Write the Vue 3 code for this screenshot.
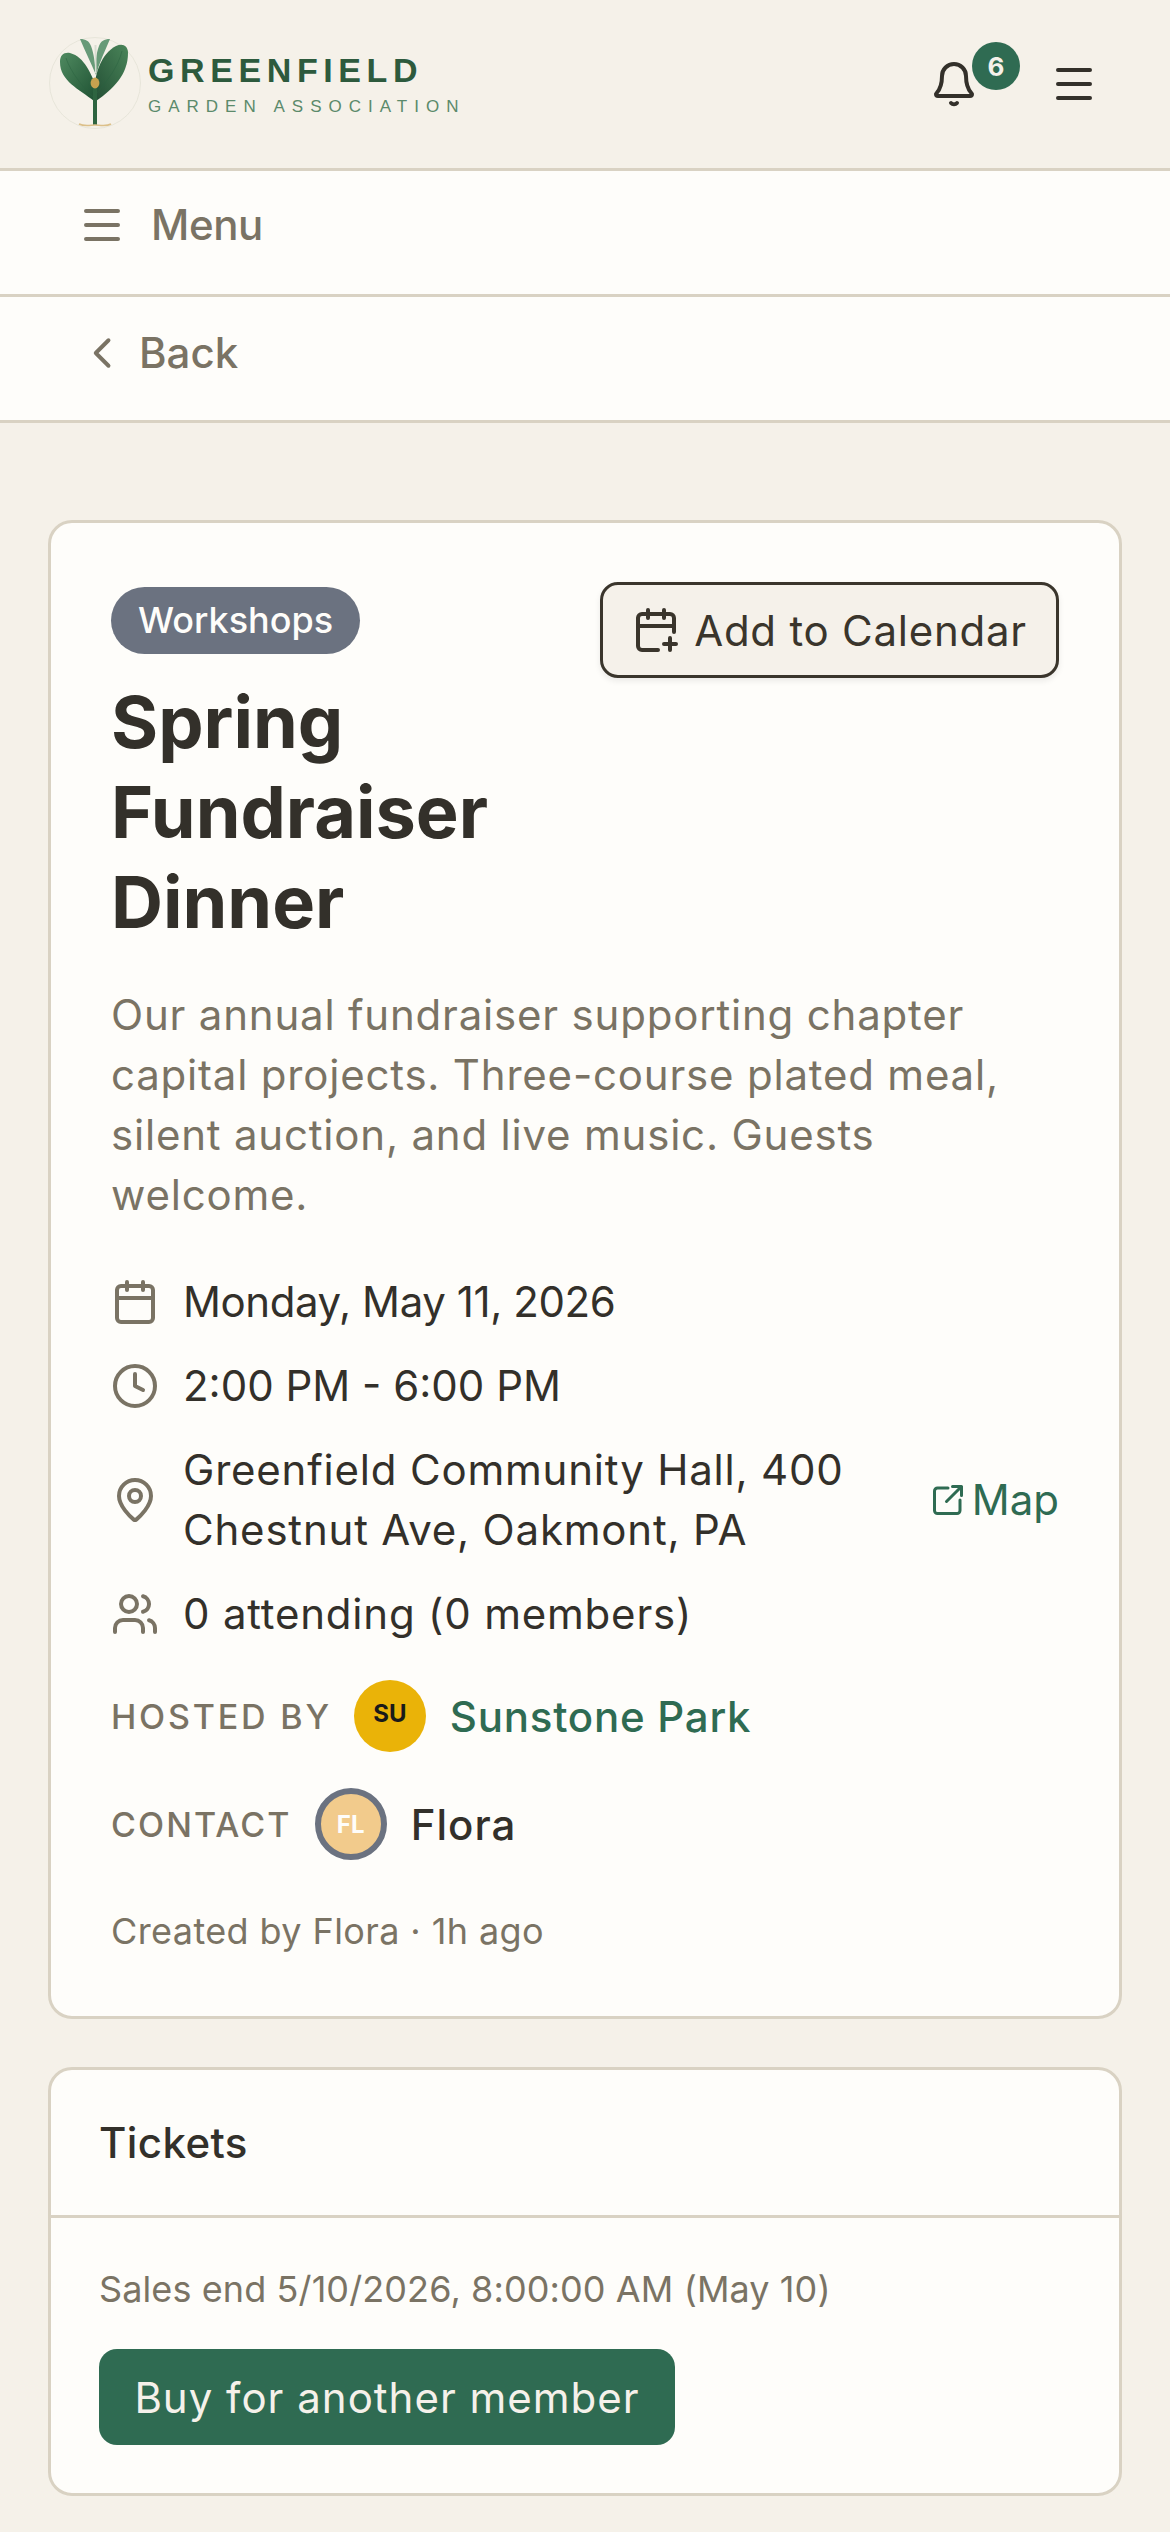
<template>
  <div class="page">
    <header class="topbar">
      <div class="brand">
        <svg class="logo" viewBox="0 0 94 94" width="94" height="94">
          <defs>
            <linearGradient id="leafA" x1="0" y1="0" x2="1" y2="1">
              <stop offset="0" stop-color="#4f8a60" />
              <stop offset="1" stop-color="#1f5233" />
            </linearGradient>
            <linearGradient id="leafB" x1="1" y1="0" x2="0" y2="1">
              <stop offset="0" stop-color="#4a8559" />
              <stop offset="1" stop-color="#234f35" />
            </linearGradient>
          </defs>
          <circle cx="46" cy="46" r="45.5" fill="none" stroke="#e3e2d6" stroke-width="0.8" />
          <path d="M31 2 C37 2 40 4 42 9 C45 17 46 26 47 38 C42 26 36 14 31 2Z" fill="#679a78" />
          <path d="M61 2 C55 2 52 4 50 9 C47 17 46 26 47 38 C50 26 56 14 61 2Z" fill="#679a78" />
          <path d="M45.5 8 L47.5 8 L47.5 36 L46 36Z" fill="#d9ddd2" />
          <path d="M45 64 C30 52 11 44 11 25 C11 18 15 15 21 16 C36 20 42 38 46 46Z" fill="url(#leafA)" />
          <path d="M47 64 C64 52 79 38 79 16 C79 8 73 6 67 9 C52 17 47 36 46 46Z" fill="url(#leafB)" />
          <path d="M17 21 C22 36 34 50 44 60" fill="none" stroke="#2a6340" stroke-width="0.5" />
          <path d="M73 14 C69 30 58 44 48 56" fill="none" stroke="#2a6340" stroke-width="0.5" />
          <rect x="44" y="46" width="4" height="42" fill="#2d6440" />
          <ellipse cx="46" cy="46" rx="4.4" ry="5.4" fill="#c7a24f" />
          <path d="M30 87 C36 90 42 88 46 88 C50 88 57 90 62 87" fill="none" stroke="#dcc08a" stroke-width="1.6" />
        </svg>
        <div class="brand-text">
          <div class="brand-name">GREENFIELD</div>
          <div class="brand-sub">GARDEN ASSOCIATION</div>
        </div>
      </div>
      <div class="top-actions">
        <div class="bell">
          <svg width="48" height="48" viewBox="0 0 24 24" fill="none" stroke="#33302a" stroke-width="2" stroke-linecap="round" stroke-linejoin="round">
            <path d="M6 8a6 6 0 0 1 12 0c0 7 3 8.500 3 9a1 1 0 0 1-1 1H4a1 1 0 0 1-1-1c0-.5 3-2 3-9" />
            <path d="M10.500 21.500a2 2 0 0 0 3 0" />
          </svg>
          <span class="badge">6</span>
        </div>
        <svg class="burger" width="48" height="48" viewBox="0 0 24 24" fill="none" stroke="#33302a" stroke-width="2" stroke-linecap="round">
          <path d="M4 5h16M4 12h16M4 19h16" />
        </svg>
      </div>
    </header>

    <div class="subrow menu-row">
      <svg width="48" height="48" viewBox="0 0 24 24" fill="none" stroke="#7a7364" stroke-width="2" stroke-linecap="round">
        <path d="M4 5h16M4 12h16M4 19h16" />
      </svg>
      <span>Menu</span>
    </div>
    <div class="subrow back-row">
      <svg width="36" height="36" viewBox="0 0 24 24" fill="none" stroke="#7a7364" stroke-width="2.600" stroke-linecap="round" stroke-linejoin="round">
        <path d="M15 3.500 6.500 12l8.500 8.500" />
      </svg>
      <span>Back</span>
    </div>

    <main class="content">
      <section class="card event">
        <div class="event-top">
          <div class="event-head">
            <span class="tag">Workshops</span>
            <h1>Spring Fundraiser Dinner</h1>
          </div>
          <button class="cal-btn">
            <svg width="48" height="48" viewBox="0 0 24 24" fill="none" stroke="#3a352c" stroke-width="2" stroke-linecap="round" stroke-linejoin="round">
              <path d="M21 13V6a2 2 0 0 0-2-2H5a2 2 0 0 0-2 2v14a2 2 0 0 0 2 2h8" />
              <path d="M16 2v4M8 2v4M3 10h18M19 16v6M16 19h6" />
            </svg>
            Add to Calendar
          </button>
        </div>

        <p class="desc">Our annual fundraiser supporting chapter capital projects. Three-course plated meal, silent auction, and live music. Guests welcome.</p>

        <div class="facts">
          <div class="fact">
            <svg width="48" height="48" viewBox="0 0 24 24" fill="none" stroke="#7a7364" stroke-width="2" stroke-linecap="round" stroke-linejoin="round">
              <rect x="3" y="4" width="18" height="18" rx="2" />
              <path d="M16 2v4M8 2v4M3 10h18" />
            </svg>
            <span class="date">Monday, May 11, 2026</span>
          </div>
          <div class="fact">
            <svg width="48" height="48" viewBox="0 0 24 24" fill="none" stroke="#7a7364" stroke-width="2" stroke-linecap="round" stroke-linejoin="round">
              <circle cx="12" cy="12" r="10" />
              <path d="M12 6v6l4 2" />
            </svg>
            <span>2:00 PM - 6:00 PM</span>
          </div>
          <div class="fact">
            <svg width="48" height="48" viewBox="0 0 24 24" fill="none" stroke="#7a7364" stroke-width="2" stroke-linecap="round" stroke-linejoin="round">
              <path d="M20 10c0 5-5.500 10.200-7.400 11.800a1 1 0 0 1-1.200 0C9.500 20.200 4 15 4 10a8 8 0 0 1 16 0" />
              <circle cx="12" cy="10" r="3" />
            </svg>
            <span class="addr">Greenfield Community Hall, 400 Chestnut Ave, Oakmont, PA</span>
            <a class="map">
              <svg width="36" height="36" viewBox="0 0 24 24" fill="none" stroke="#2f6b52" stroke-width="2" stroke-linecap="round" stroke-linejoin="round">
                <path d="M12 4H5a2 2 0 0 0-2 2v13a2 2 0 0 0 2 2h13a2 2 0 0 0 2-2v-7" />
                <path d="M11 13 21 3M15 3h6v6" />
              </svg>
              Map
            </a>
          </div>
          <div class="fact">
            <svg width="48" height="48" viewBox="0 0 24 24" fill="none" stroke="#7a7364" stroke-width="2" stroke-linecap="round" stroke-linejoin="round">
              <path d="M16 21v-2a4 4 0 0 0-4-4H6a4 4 0 0 0-4 4v2" />
              <circle cx="9" cy="7" r="4" />
              <path d="M22 21v-2a4 4 0 0 0-3-3.870M16 3.130a4 4 0 0 1 0 7.750" />
            </svg>
            <span class="attending">0 attending (0 members)</span>
          </div>
        </div>

        <div class="person">
          <span class="label hosted">HOSTED BY</span>
          <span class="avatar su">SU</span>
          <a class="host">Sunstone Park</a>
        </div>
        <div class="person">
          <span class="label contact">CONTACT</span>
          <span class="avatar fl">FL</span>
          <span class="name">Flora</span>
        </div>
        <p class="created">Created by Flora · 1h ago</p>
      </section>

      <section class="card tickets">
        <h2>Tickets</h2>
        <div class="tickets-body">
          <p>Sales end 5/10/2026, 8:00:00 AM (May 10)</p>
          <button class="buy">Buy for another member</button>
        </div>
      </section>
    </main>
  </div>
</template>

<script setup>
</script>

<style>
html, body {
  background: #f5f1e9;
}
</style>

<style scoped>
.page {
  width: 1170px;
  font-family: Inter, "Liberation Sans", sans-serif;
  color: #33302a;
  background: #f5f1e9;
}

svg {
  display: block;
  flex-shrink: 0;
}

.topbar {
  height: 168px;
  border-bottom: 3px solid #d9d2c3;
  display: flex;
  align-items: center;
  justify-content: space-between;
  padding: 0 72px 0 49px;
}

.brand {
  display: flex;
  align-items: center;
  gap: 5px;
}

.brand-name {
  font-family: "Liberation Sans", sans-serif;
  font-weight: 700;
  font-size: 34px;
  letter-spacing: 5.600px;
  color: #2d5a3d;
  line-height: 40px;
  margin-top: -2px;
}

.brand-sub {
  font-family: "Liberation Sans", sans-serif;
  font-size: 17px;
  letter-spacing: 7px;
  color: #5b8a6b;
  line-height: 20px;
  margin-top: 7px;
}

.top-actions {
  display: flex;
  align-items: center;
  gap: 72px;
}

.bell {
  position: relative;
}

.badge {
  position: absolute;
  top: -18px;
  left: 42px;
  width: 48px;
  height: 48px;
  border-radius: 50%;
  background: #2f6b52;
  color: #f5f1ea;
  font-weight: 700;
  font-size: 26px;
  display: flex;
  align-items: center;
  justify-content: center;
}

.subrow {
  height: 126px;
  box-sizing: border-box;
  border-bottom: 3px solid #d9d2c3;
  background: #fefdfa;
  display: flex;
  align-items: center;
  color: #7a7364;
  font-size: 42px;
  font-weight: 500;
}

.menu-row {
  padding: 0 0 16px 78px;
  gap: 25px;
  letter-spacing: -0.400px;
}

.back-row {
  padding: 0 0 12px 86px;
  gap: 17px;
}

.content {
  padding: 97px 48px 37px;
  display: flex;
  flex-direction: column;
  gap: 48px;
}

.card {
  background: #fefdfa;
  border: 3px solid #d9d2c3;
  border-radius: 24px;
}

.event {
  padding: 60px 60px 62px;
}

.event-top {
  display: flex;
  justify-content: space-between;
  align-items: flex-start;
}

.event-head {
  width: 460px;
}

.tag {
  display: inline-block;
  margin-top: 4px;
  height: 67px;
  line-height: 67px;
  padding: 0 27px;
  border-radius: 34px;
  background: #6b7280;
  color: #fefdfa;
  font-size: 36px;
  font-weight: 500;
}

h1 {
  margin: 23px 0 0;
  font-size: 72px;
  line-height: 90px;
  font-weight: 700;
  color: #33302a;
}

.cal-btn {
  width: 459px;
  height: 96px;
  box-sizing: border-box;
  border: 3px solid #3a352c;
  border-radius: 18px;
  background: #f5f1ea;
  box-shadow: 0 3px 6px rgba(0, 0, 0, 0.08);
  display: flex;
  align-items: center;
  justify-content: center;
  gap: 14px;
  font-family: inherit;
  font-size: 42px;
  letter-spacing: 0.750px;
  color: #3a352c;
  margin-top: -1px;
  padding: 0;
}

.desc {
  margin: 38px 0 0;
  font-size: 42px;
  line-height: 60px;
  letter-spacing: 0.800px;
  color: #7a7364;
}

.facts {
  margin-top: 47px;
  display: flex;
  flex-direction: column;
  gap: 24px;
}

.fact {
  display: flex;
  align-items: center;
  gap: 24px;
  font-size: 42px;
  line-height: 60px;
  color: #33302a;
}

.date {
  letter-spacing: -0.400px;
}

.addr {
  width: 720px;
  letter-spacing: 0.800px;
}

.attending {
  letter-spacing: 0.800px;
}

.map {
  margin-left: auto;
  display: flex;
  align-items: center;
  gap: 6px;
  color: #2f6b52;
}

.person {
  display: flex;
  align-items: center;
  gap: 24px;
  margin-top: 36px;
}

.label {
  font-size: 34px;
  font-weight: 500;
  color: #7a7364;
}

.hosted {
  letter-spacing: 2.800px;
  margin-right: -2px;
}

.contact {
  letter-spacing: 2.100px;
  margin-right: -1px;
}

.avatar {
  width: 72px;
  height: 72px;
  box-sizing: border-box;
  border-radius: 50%;
  display: flex;
  align-items: center;
  justify-content: center;
  font-size: 24px;
  font-weight: 700;
}

.su {
  background: #eab308;
  color: #1a1a1a;
  padding-bottom: 5px;
}

.fl {
  background: #f2cb8c;
  border: 6px solid #6b7280;
  color: #fefdfa;
}

.host {
  font-size: 42px;
  font-weight: 500;
  letter-spacing: 0.750px;
  color: #2f6b52;
}

.name {
  font-size: 42px;
  font-weight: 500;
  letter-spacing: 1px;
  color: #33302a;
}

.created {
  margin: 49px 0 0;
  font-size: 36px;
  line-height: 45px;
  letter-spacing: 0.400px;
  color: #7a7364;
}

.tickets h2 {
  margin: 0;
  height: 145px;
  border-bottom: 3px solid #d9d2c3;
  padding-left: 48px;
  display: flex;
  align-items: center;
  font-size: 42px;
  font-weight: 500;
  letter-spacing: 0.400px;
  color: #33302a;
}

.tickets-body {
  padding: 46px 48px 48px;
}

.tickets-body p {
  margin: 0;
  font-size: 36px;
  line-height: 50px;
  letter-spacing: 0.100px;
  color: #7a7364;
}

.buy {
  display: block;
  margin-top: 35px;
  width: 576px;
  height: 96px;
  border: none;
  border-radius: 18px;
  background: #2f6b52;
  color: #f5f1ea;
  font-family: inherit;
  font-size: 42px;
  letter-spacing: 1px;
  padding: 0;
}
</style>
